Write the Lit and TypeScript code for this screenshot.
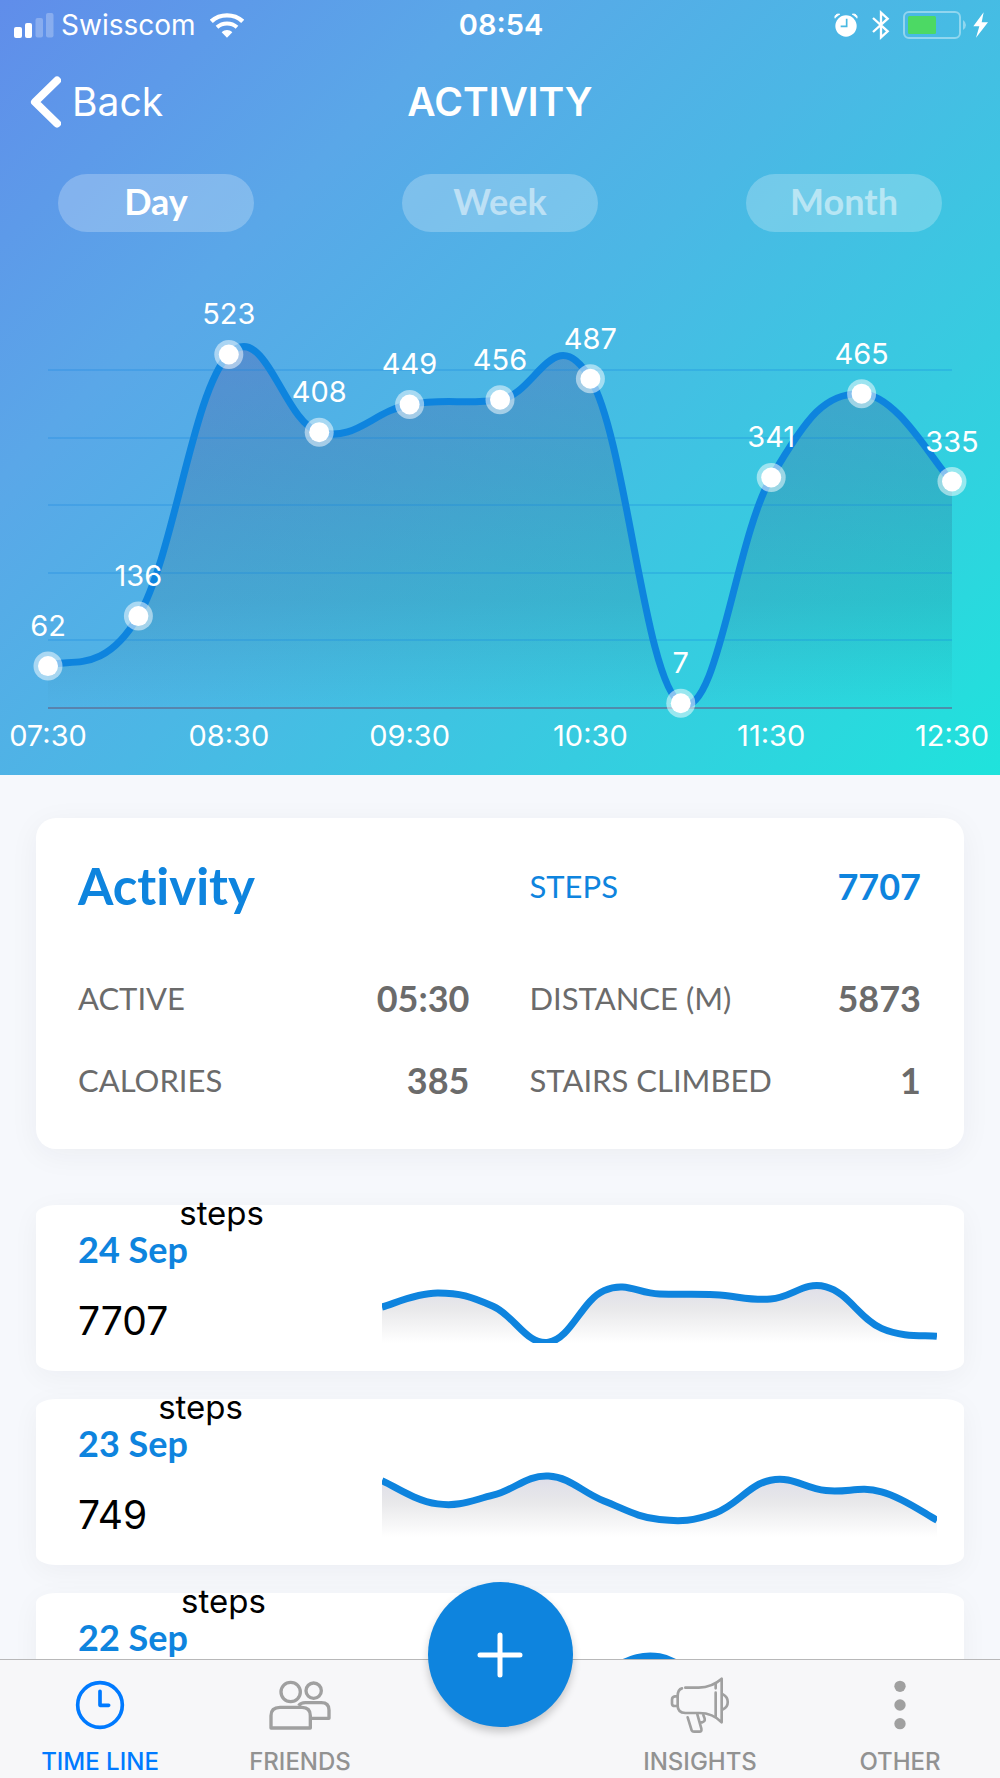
import { LitElement, html, svg, css } from "lit";
import { customElement, property, state } from "lit/decorators.js";

const BLUE = css`#0e84de`;

type Point = { x: number; y: number };

/** Cubic curve through the points; each handle is a fifth of the chord between the neighbours. */
function smoothPath(points: Point[]): string {
  const k = 0.2;
  const at = (i: number) => points[Math.max(0, Math.min(points.length - 1, i))];
  let d = `M${at(0).x} ${at(0).y}`;
  for (let i = 1; i < points.length; i++) {
    const before = at(i - 2);
    const prev = at(i - 1);
    const cur = at(i);
    const next = at(i + 1);
    const c1 = { x: prev.x + (cur.x - before.x) * k, y: prev.y + (cur.y - before.y) * k };
    const c2 = { x: cur.x - (next.x - prev.x) * k, y: cur.y - (next.y - prev.y) * k };
    d += `C${c1.x.toFixed(1)} ${c1.y.toFixed(1)} ${c2.x.toFixed(1)} ${c2.y.toFixed(1)} ${cur.x.toFixed(1)} ${cur.y.toFixed(1)}`;
  }
  return d;
}

@customElement("activity-chart")
export class ActivityChart extends LitElement {
  @property({ attribute: false }) values: number[] = [];
  @property({ attribute: false }) times: string[] = [];

  static styles = css`
    :host { display: block; }
    .chart { display: block; width: 100%; height: auto; }
    .grid { stroke: ${BLUE}; stroke-opacity: 0.25; stroke-width: 2; }
    .axis { stroke: #5c6f96; stroke-opacity: 0.7; stroke-width: 2; }
    .line { fill: none; stroke: ${BLUE}; stroke-width: 7; }
    .halo { fill: #fff; fill-opacity: 0.5; }
    .dot { fill: #fff; }
    .label { fill: #fff; font: 400 29px Inter, "Liberation Sans", sans-serif; text-anchor: middle; }
  `;

  render() {
    const left = 48;
    const right = 952;
    const base = 476;
    const step = (right - left) / (this.values.length - 1);
    const points = this.values.map((v, i) => ({ x: left + i * step, y: base - v * 0.676 }));
    const line = smoothPath(points);
    return html`
      <svg class="chart" viewBox="0 0 1000 543" role="img" aria-label="Steps per half hour">
        <defs>
          <linearGradient id="fill" gradientUnits="userSpaceOnUse" x1="0" y1="116" x2="0" y2="476">
            <stop offset="0" stop-color="#54449a" stop-opacity=".27" />
            <stop offset=".35" stop-color="#34487c" stop-opacity=".22" />
            <stop offset=".7" stop-color="#205064" stop-opacity=".15" />
            <stop offset="1" stop-color="#205a64" stop-opacity="0" />
          </linearGradient>
        </defs>
        <path d="${line}L${right} ${base}L${left} ${base}Z" fill="url(#fill)" />
        ${[100, 200, 300, 400, 500].map((v) => {
          const y = Math.round(base - v * 0.676);
          return svg`<line class="grid" x1=${left} x2=${right} y1=${y} y2=${y} />`;
        })}
        <path class="line" d=${line} />
        <line class="axis" x1=${left} x2=${right} y1=${base} y2=${base} />
        ${points.map((p, i) => svg`
          <circle class="halo" cx=${p.x} cy=${p.y} r="14.5" />
          <circle class="dot" cx=${p.x} cy=${p.y} r="10" />
          <text class="label" x=${p.x} y=${p.y - 30}>${this.values[i]}</text>
        `)}
        ${this.times.map((t, i) => svg`<text class="label" x=${left + i * 2 * step} y=${base + 38}>${t}</text>`)}
      </svg>
    `;
  }
}

@customElement("day-card")
export class DayCard extends LitElement {
  @property() day = "";
  @property({ type: Number }) total = 0;
  @property({ type: Number }) scale = 1;
  @property({ attribute: false }) values: number[] = [];

  static styles = css`
    :host { display: block; }
    .card {
      display: grid; grid-template-columns: 304fr 555fr; align-items: end;
      min-height: 166px; padding: 0 27px 28px 42px; box-sizing: border-box;
      background: #fff; border-radius: 20px / 10px; box-shadow: 0 6px 28px rgba(30, 30, 50, 0.045);
    }
    .info { display: flex; flex-direction: column; align-items: flex-start; gap: 30px; }
    .day { margin: 0; color: ${BLUE}; font: 700 36px/40px Lato, sans-serif; }
    .total { position: relative; margin: 0; color: #000; font: 400 39px/44px Inter, sans-serif; }
    .unit { position: absolute; left: 100%; bottom: 112px; margin-left: 11px; font-size: 33px; line-height: 36px; }
    .spark { display: block; width: 100%; height: auto; overflow: hidden; }
    .line { fill: none; stroke: ${BLUE}; stroke-width: 7; }
  `;

  render() {
    const step = 555 / (this.values.length - 1);
    const line = smoothPath(this.values.map((v, i) => ({ x: i * step, y: 110 - v * this.scale })));
    return html`
      <article class="card">
        <div class="info">
          <h3 class="day">${this.day}</h3>
          <p class="total">${this.total}<span class="unit">steps</span></p>
        </div>
        <svg class="spark" viewBox="0 0 555 110" role="img" aria-label="Steps on ${this.day}">
          <defs>
            <linearGradient id="fill" gradientUnits="userSpaceOnUse" x1="0" y1="40" x2="0" y2="110">
              <stop offset="0" stop-color="#d9d9e8" />
              <stop offset=".5" stop-color="#e8e8ea" />
              <stop offset="1" stop-color="#fff" />
            </linearGradient>
          </defs>
          <path d="${line}L555 110L0 110Z" fill="url(#fill)" />
          <path class="line" d=${line} />
        </svg>
      </article>
    `;
  }
}

const DAY_STEPS = [62, 136, 523, 408, 449, 456, 487, 7, 341, 465, 335];

const clockIcon = html`<svg width="50" height="50" viewBox="0 0 150 150" fill="none" stroke="currentColor" aria-hidden="true">
  <circle cx="75" cy="75" r="67" stroke-width="11" />
  <path d="M75 34V76H101" stroke-width="11" stroke-linecap="round" stroke-linejoin="round" />
</svg>`;

const friendsIcon = html`<svg width="64" height="50" viewBox="0 0 192 150" fill="none" stroke="currentColor" stroke-width="10" stroke-linejoin="round" aria-hidden="true">
  <circle cx="68" cy="36" r="29" />
  <circle cx="137" cy="32" r="23" />
  <path d="M9 144V107C9 90 20 82 36 82H102C118 82 127 91 127 107V144Z" />
  <path d="M92 77C97 70 104 68 112 68H160C175 68 183 76 183 90V115H130" />
</svg>`;

const megaphoneIcon = html`<svg width="60" height="60" viewBox="0 0 180 180" fill="none" stroke="currentColor" stroke-width="8" stroke-linecap="round" stroke-linejoin="round" aria-hidden="true">
  <path d="M46 38H86C112 37 135 29 155 11V142C138 124 114 114 88 114H46C31 113 23 105 23 92V64C23 50 28 42 36 40" />
  <path d="M137 27V40M137 53V126" />
  <path d="M22 64H15Q6 65 6 74V86Q6 93 15 93H22" />
  <path d="M159 58C178 68 178 94 159 103" />
  <path d="M53 127L65 166Q67 170 72 170H88Q96 170 94 161L82 118" />
  <path d="M100 120L104 131Q106 140 96 142H93" />
</svg>`;

const moreIcon = html`<svg width="12" height="50" viewBox="0 0 36 150" fill="currentColor" aria-hidden="true">
  <circle cx="18" cy="19" r="17" /><circle cx="18" cy="75" r="17" /><circle cx="18" cy="131" r="17" />
</svg>`;

@customElement("app-root")
export class AppRoot extends LitElement {
  @state() private range = "Day";

  static styles = css`
    :host {
      display: flex; flex-direction: column; height: 100vh; overflow: hidden;
      background: #f6f8fc; font-family: Inter, "Liberation Sans", sans-serif; color: #6b6b6b;
    }
    button { font: inherit; border: 0; padding: 0; cursor: pointer; }
    a { color: inherit; text-decoration: none; }
    svg { flex: none; }
    .scroll { flex: 1; min-height: 0; overflow-y: auto; scrollbar-width: none; }
    .hero {
      color: #fff;
      background: linear-gradient(135deg, #608dea 0%, #5aa7e8 27%, #4bb7e5 50%, #36cce0 75%, #1fe3dc 100%);
    }
    .status {
      display: grid; grid-template-columns: 1fr auto 1fr; align-items: center;
      height: 50px; padding: 0 12px 0 14px; font-size: 28px; line-height: 34px;
    }
    .carrier { display: flex; align-items: center; gap: 7px; font-weight: 400; }
    .wifi { margin-left: 7px; }
    .clock { font-size: 29px; font-weight: 600; }
    .indicators { display: flex; align-items: center; justify-content: flex-end; }
    .bluetooth { margin-left: 14px; }
    .battery { margin-left: 13px; }
    .bolt { margin-left: 6px; }
    .nav {
      display: grid; grid-template-columns: 1fr auto 1fr; align-items: center;
      height: 104px; padding: 0 30px;
    }
    .back { display: flex; align-items: center; gap: 11px; font-size: 39px; line-height: 48px; font-weight: 400; }
    .title { margin: 0; font-size: 39px; line-height: 48px; font-weight: 600; }
    .ranges { display: flex; justify-content: space-between; padding: 20px 58px 0; }
    .range {
      width: 196px; height: 58px; border-radius: 29px; color: rgba(255, 255, 255, 0.5);
      background: rgba(255, 255, 255, 0.24); font: 700 36px/54px Lato, sans-serif; padding-bottom: 4px;
    }
    .range.selected { color: #fff; }
    .content { padding: 43px 36px; }
    .summary {
      display: grid; grid-template-columns: 1fr 1fr; column-gap: 60px; margin: 0 0 56px;
      padding: 26px 43px 28px 42px; background: #fff; border-radius: 20px;
      box-shadow: 0 6px 30px rgba(30, 30, 50, 0.05); font-family: Lato, sans-serif;
    }
    .heading {
      margin: 0 0 29px; color: ${BLUE}; font-size: 51px; line-height: 84px; font-weight: 700;
      font-variant-ligatures: none;
    }
    .stat { display: flex; align-items: center; justify-content: space-between; height: 82px; line-height: 40px; }
    .stat.main { color: ${BLUE}; height: 84px; }
    .name { font-size: 31px; font-weight: 400; }
    .value { margin: 0; font-size: 36px; font-weight: 700; }
    .days { display: flex; flex-direction: column; gap: 28px; }
    .tabs {
      position: relative; display: grid; grid-template-columns: repeat(5, 1fr);
      background: #f7f7f9; border-top: 1px solid #b8b8b9; color: #929292;
    }
    .tab {
      display: flex; flex-direction: column; align-items: center; gap: 13px;
      padding: 15px 0 2px; font-size: 24px; line-height: 28px; font-weight: 500;
    }
    .icon { display: flex; align-items: center; justify-content: center; height: 60px; color: #a0a0a0; }
    .tab.current, .tab.current .icon { color: #007aff; }
    .add {
      justify-self: center; display: flex; align-items: center; justify-content: center;
      width: 145px; height: 145px; margin: -78px 0 0; border-radius: 50%;
      background: ${BLUE}; box-shadow: 0 5px 8px rgba(0, 0, 0, 0.2);
    }
  `;

  private stat(name: string, value: string, main = false) {
    return html`<div class="stat ${main ? "main" : ""}"><span class="name">${name}</span><strong class="value">${value}</strong></div>`;
  }

  private tab(label: string, icon: unknown, current = false) {
    return html`<a class="tab ${current ? "current" : ""}" href="#" aria-current=${current ? "page" : "false"}>
      <span class="icon">${icon}</span><span>${label}</span>
    </a>`;
  }

  render() {
    return html`
      <div class="scroll">
        <header class="hero">
          <div class="status">
            <div class="carrier">
              <svg width="40" height="25" viewBox="0 0 40 25" fill="#fff" aria-hidden="true">
                <rect x="0" y="14" width="8" height="11" rx="2" />
                <rect x="11" y="10" width="7" height="15" rx="2" />
                <rect x="21.500" y="5" width="7.500" height="19.500" rx="2" opacity=".26" />
                <rect x="32" y="0" width="7.500" height="24.500" rx="2" opacity=".26" />
              </svg>
              <span>Swisscom</span>
              <svg class="wifi" width="34" height="25" viewBox="0 0 102 75" fill="none" stroke="#fff" aria-hidden="true">
                <path d="M4 25C30 1 72 1 98 25" stroke-width="13" />
                <path d="M21 43C38 28 64 28 81 43" stroke-width="12" />
                <path d="M35 58C44 49 58 49 67 58L51 74Z" fill="#fff" stroke="none" />
              </svg>
            </div>
            <div class="clock">08:54</div>
            <div class="indicators">
              <svg width="24" height="24" viewBox="0 0 72 72" aria-hidden="true">
                <circle cx="36" cy="39" r="32" fill="#fff" />
                <path d="M3 16C1 7 8 1 18 4M69 16C71 7 64 1 54 4" fill="#fff" stroke="#fff" stroke-width="3" />
                <path d="M38 17V40H20" fill="none" stroke="#49b9e2" stroke-width="5" />
              </svg>
              <svg class="bluetooth" width="18" height="30" viewBox="0 0 54 90" fill="none" stroke="#fff" stroke-width="7" aria-hidden="true">
                <path d="M3 24L47 64L27 82V8L47 26L3 66" />
              </svg>
              <svg class="battery" width="64" height="28" viewBox="0 0 64 28" aria-hidden="true">
                <rect x="1" y="1" width="56" height="26" rx="5" fill="none" stroke="#fff" stroke-opacity=".4" stroke-width="2" />
                <rect x="5" y="5" width="28" height="18" rx="1.500" fill="#4cd964" />
                <path d="M60 9Q63 11 63 14T60 19Z" fill="#fff" fill-opacity=".4" />
              </svg>
              <svg class="bolt" width="15" height="26" viewBox="0 0 45 78" fill="#fff" aria-hidden="true">
                <path d="M32 1L1 43H19L9 77L45 31H26Z" />
              </svg>
            </div>
          </div>
          <div class="nav">
            <a class="back" href="#">
              <svg width="31" height="52" viewBox="0 0 31 52" fill="none" stroke="#fff" stroke-width="8" stroke-linecap="round" stroke-linejoin="round" aria-hidden="true">
                <path d="M27 4.500L5 26L27 47.500" />
              </svg>
              <span>Back</span>
            </a>
            <h1 class="title">ACTIVITY</h1>
          </div>
          <div class="ranges">
            ${["Day", "Week", "Month"].map((r) => html`
              <button class="range ${this.range === r ? "selected" : ""}" aria-pressed=${this.range === r} @click=${() => { this.range = r; }}>${r}</button>
            `)}
          </div>
          <activity-chart .values=${DAY_STEPS} .times=${["07:30", "08:30", "09:30", "10:30", "11:30", "12:30"]}></activity-chart>
        </header>
        <main class="content">
          <section class="summary">
            <h2 class="heading">Activity</h2>
            ${this.stat("STEPS", "7707", true)}
            ${this.stat("ACTIVE", "05:30")}
            ${this.stat("DISTANCE (M)", "5873")}
            ${this.stat("CALORIES", "385")}
            ${this.stat("STAIRS CLIMBED", "1")}
          </section>
          <section class="days">
            <day-card day="24 Sep" total="7707" scale="0.1075" .values=${[...DAY_STEPS].reverse()}></day-card>
            <day-card day="23 Sep" total="749" scale="0.58" .values=${[97, 57, 72, 105, 62, 30, 41, 98, 80, 78, 29]}></day-card>
            <day-card day="22 Sep" total="7287" scale="0.061" .values=${[320, 410, 380, 460, 980, 1220, 700, 720, 790, 840, 467]}></day-card>
          </section>
        </main>
      </div>
      <nav class="tabs">
        ${this.tab("TIME LINE", clockIcon, true)}
        ${this.tab("FRIENDS", friendsIcon)}
        <button class="add" aria-label="Add">
          <svg width="46" height="46" viewBox="0 0 46 46" stroke="#fff" stroke-width="5" stroke-linecap="round" aria-hidden="true">
            <path d="M23 3V43M3 23H43" />
          </svg>
        </button>
        ${this.tab("INSIGHTS", megaphoneIcon)}
        ${this.tab("OTHER", moreIcon)}
      </nav>
    `;
  }
}
